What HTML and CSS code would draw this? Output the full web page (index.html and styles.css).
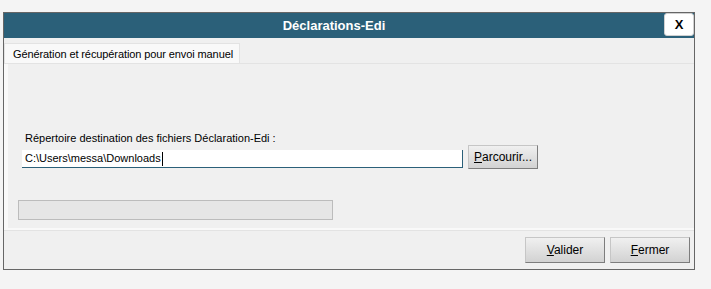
FILE: index.html
```html
<!DOCTYPE html>
<html lang="fr">
<head>
  <meta charset="UTF-8">
  <meta name="viewport" content="width=device-width, initial-scale=1.0">
  <title>Déclarations-Edi</title>
  <link rel="stylesheet" href="styles.css">
</head>
<body>
  <div class="window">
    <div class="titlebar">
      <span class="title">Déclarations-Edi</span>
      <button class="close">X</button>
    </div>

    <div class="tabs">
      <div class="tab">Génération et récupération pour envoi manuel</div>
    </div>

    <div class="panel">
      <div class="panel-body">
        <label class="field-label">Répertoire destination des fichiers Déclaration-Edi :</label>
        <div class="path-row">
          <div class="path-input">C:\Users\messa\Downloads<span class="caret"></span></div>
          <button class="btn btn-browse"><u>P</u>arcourir...</button>
        </div>
        <div class="progress"></div>
      </div>
    </div>

    <div class="footer">
      <button class="btn btn-footer"><u>V</u>alider</button>
      <button class="btn btn-footer"><u>F</u>ermer</button>
    </div>
  </div>
</body>
</html>
```

FILE: styles.css
```css
body {
  margin: 0;
  padding: 0;
  background-color: #f4f4f4;
  font-family: 'Liberation Sans', Arial, sans-serif;
  font-size: 12px;
  color: #000;
}
.window {
  box-sizing: border-box;
  width: 692px;
  height: 258px;
  margin: 12px 0 0 3px;
  border: 1px solid #666;
  background-color: #f0f0f0;
  display: flex;
  flex-direction: column;
}
.titlebar {
  height: 25px;
  background-color: #2b6079;
  display: flex;
  align-items: flex-start;
}
.title {
  flex: 1;
  text-align: center;
  color: #fff;
  font-weight: bold;
  font-size: 13px;
  line-height: 25px;
}
.close {
  width: 30px;
  height: 23px;
  background: #fff;
  border: 1px solid #d0d0d0;
  border-radius: 3px;
  font-family: 'Liberation Sans', Arial, sans-serif;
  font-weight: bold;
  font-size: 13px;
  padding: 0;
}
.tabs {
  height: 25px;
  display: flex;
  align-items: flex-end;
}
.tab {
  box-sizing: border-box;
  height: 20px;
  width: 236px;
  padding: 4px 0 0 8px;
  background-color: #f9f9f9;
  border: 1px solid #e3e3e3;
  border-bottom: none;
  font-size: 11px;
  letter-spacing: -0.1px;
  white-space: nowrap;
}
.panel {
  background-color: #f9f9f9;
  border-top: 1px solid #e3e3e3;
  border-bottom: 1px solid #e3e3e3;
  padding: 0 0 2px 4px;
}
.panel-body {
  height: 164px;
  box-sizing: border-box;
  background-color: #f0f0f0;
  padding-top: 67px;
  display: flex;
  flex-direction: column;
  align-items: flex-start;
}
.field-label {
  height: 14px;
  line-height: 14px;
  margin-left: 17px;
  font-size: 11px;
}
.path-row {
  display: flex;
  align-items: flex-start;
  gap: 5px;
  margin-left: 14px;
}
.path-input {
  box-sizing: border-box;
  width: 441px;
  height: 18px;
  margin-top: 5px;
  padding-left: 3px;
  background: #fff;
  border-right: 1px solid #2b6079;
  border-bottom: 1px solid #2b6079;
  font-size: 11px;
  line-height: 17px;
  display: flex;
  align-items: center;
}
.caret {
  width: 1px;
  height: 14px;
  background: #000;
  margin-left: 1px;
}
.btn {
  box-sizing: border-box;
  background: linear-gradient(#f0f0f0, #d2d2d2);
  border: 1px solid;
  border-color: #c6c6c6 #7d7d7d #7d7d7d #c6c6c6;
  font-family: 'Liberation Sans', Arial, sans-serif;
  font-size: 12px;
  color: #000;
  padding: 0;
}
.btn-browse {
  width: 70px;
  height: 24px;
}
.progress {
  box-sizing: border-box;
  width: 315px;
  height: 20px;
  margin: 31px 0 0 10px;
  background-color: #e6e6e6;
  border: 1px solid #bcbcbc;
}
.footer {
  flex: 1;
  display: flex;
  justify-content: flex-end;
  align-items: flex-start;
  gap: 5px;
  padding: 6px 4px 0 0;
}
.btn-footer {
  width: 80px;
  height: 26px;
}
```
